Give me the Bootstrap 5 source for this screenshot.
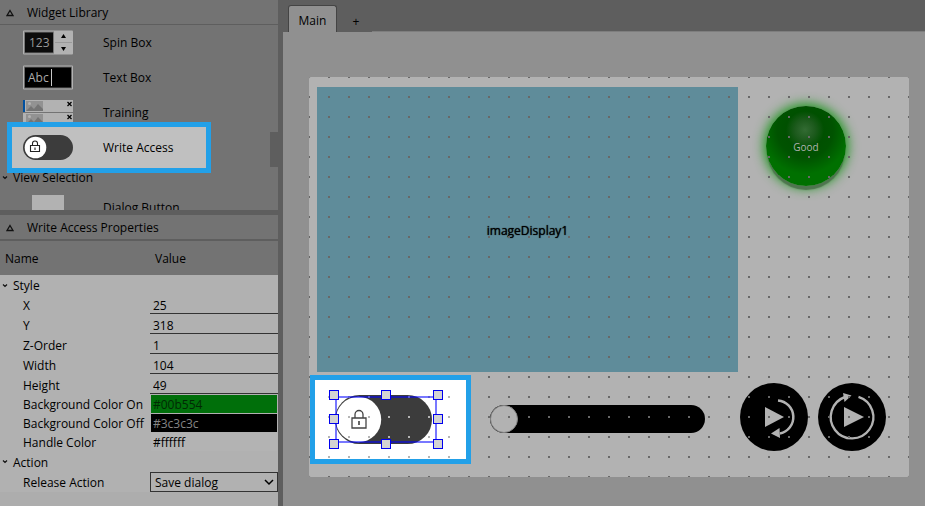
<!DOCTYPE html>
<html lang="en">
<head>
<meta charset="utf-8">
<meta name="viewport" content="width=device-width, initial-scale=1">
<title>View Designer</title>
<link href="https://cdn.jsdelivr.net/npm/bootstrap@5.3.0/dist/css/bootstrap.min.css" rel="stylesheet">
<style>
body{font-family:"Open Sans","Noto Sans",sans-serif;font-size:12px;line-height:18px;color:#000;background:#5e5e5e}
button{color:inherit;font:inherit}
.side{width:278px}
.pane-title{height:24px;background:#737373;font-size:12px;line-height:18px;padding:2px 0 0 6px;gap:13px}
.pane-title svg{width:8px;height:8px}
.lib-list{height:185px;background:#737373;margin-top:1px;overflow:hidden}
.lib-row{height:35px;width:100%;padding-left:23px}
.lib-row .thumb{width:50px;height:25px;margin-right:30px}
.picked{z-index:1}
.picked::before{content:"";z-index:-1;position:absolute;left:7px;top:-8px;width:204px;height:51px;background:#c0c0c0;border:5px solid #22a0e8}
.scroll-thumb{right:0;top:107px;width:8px;height:35px;background:#5e5e5e}
.fold{gap:5px;padding-left:2px}
.fold svg{width:6px;height:6px}
.lib-fold{height:25px}
.props-pane{margin-top:5px}
.props{background:#adadad;margin-top:2px}
.prop-table{table-layout:fixed;line-height:18px;background:#b1b1b1}
.prop-table th{font-weight:400}
.prop-table thead th{height:34px;background:#737373;padding:2px 5px 0}
.prop-table .c-name{width:150px}
.prop-table tbody td,.prop-table tbody th{padding:0;height:20px}
.prop-table tbody th{padding-top:2px}
.prop-table tbody .ind{padding-left:23px}
.prop-table .sect th{height:19px}
.prop-table .sect.s2 th{height:20px}
.prop-table .fold,.prop-table label{line-height:17px}
.prop-table .hue td,.prop-table .hue th{height:19px}
.prop-table .last td,.prop-table .last th{height:21px}
.prop-table label{white-space:nowrap;display:block}
.val{width:100%;height:20px;border:0;border-bottom:1px solid #333;background:transparent;padding:3px 3px 0;color:#000;line-height:16px;outline:0}
.hue .val{height:18px;margin:1px 3px 0 1px;padding:1px 2px 0;border:0;width:126px}
.hue .val.on{background:#006f0a;color:#002a04}
.hue .val.off{background:#000;color:#858585}
.hue .val.knob{background:#b3b3b3}
.pick-action{height:20px;border:1px solid #333;background:#b1b1b1;padding:1px 4px 0;color:#000;appearance:none;line-height:18px}
.pick-wrap svg{position:absolute;right:4px;top:6px;width:10px;height:8px;pointer-events:none}
.work{margin-left:5px;background:#5e5e5e;min-width:0}
.tabs{height:32px;padding-left:5px}
.tabs .tab-on{height:27px;width:49px;background:#909090;border:1px solid #444;border-bottom:0;border-radius:3px 3px 0 0}
.tabs .tab-on,.tabs .tab-add{padding:3px 0 0}
.tabs .tab-add{width:35px;height:24px;padding-left:3px}
.tabs .rule{height:1px;background:#7e7e7e}
.stage{background:#909090;padding:45px 16px 29px 26px}
.board{background:#b2b2b2;min-height:400px;border-radius:2px;overflow:hidden}
.board::after,.focus-area::before{content:"";position:absolute;inset:0;pointer-events:none;z-index:2;background:url("data:image/svg+xml,%3Csvg xmlns='http://www.w3.org/2000/svg' width='20' height='20'%3E%3Crect width='2' height='2' fill='%23686868'/%3E%3C/svg%3E") -1px -1px}
.focus-area::before{background:url("data:image/svg+xml,%3Csvg xmlns='http://www.w3.org/2000/svg' width='20' height='20'%3E%3Crect width='2' height='2' fill='%23b4b4b4'/%3E%3C/svg%3E") 13px 16px}
.node{position:absolute}
.image-display{left:8px;top:10px;width:421px;height:285px;background:#5f8c9a;font-size:12px;padding-top:3px;text-shadow:0 0 1px #000}
.lamp{left:457px;top:29px;width:80px;height:80px;color:#b2b2b2;font-size:10px;padding-top:2px;background:radial-gradient(circle at 39px 24px,#336b33 0,#1d5a1d 10px,#005000 19px,#005300 28px,#007000 44px);box-shadow:0 5px 1px -1px #4f754f,0 0 12px 2px #159415}
.focus-area{left:1px;top:298px;width:161px;height:89px;border:5px solid #22a0e8;background:#fff;z-index:3}
.switch{left:20px;top:15px;width:97px;height:49px}
.frame{left:20px;top:16px;width:102px;height:47px;border:2px solid rgba(0,0,255,.53);z-index:3}
.grip{position:absolute;width:10px;height:10px;background:#d3d3d3;border:1px solid #00e}
.g-l{left:-8px}.g-c{left:44px}.g-r{left:96px}
.g-t{top:-8px}.g-m{top:16px}.g-b{top:41px}
.slide{left:181px;top:328px;width:215px;height:28px;border-radius:14px;background:#000;appearance:none;margin:0}
.slide::-webkit-slider-thumb{appearance:none;width:28px;height:28px;border-radius:50%;background:#b2b2b2;border:1px solid #858585}
.slide::-moz-range-thumb{width:26px;height:26px;border-radius:50%;background:#b2b2b2;border:1px solid #858585}
.round{top:306px;width:68px;height:68px}
.run-once{left:431px}
.run-loop{left:509px}
</style>
<script src="https://cdn.jsdelivr.net/npm/bootstrap@5.3.0/dist/js/bootstrap.bundle.min.js"></script>
</head>
<body class="d-flex min-vh-100">
<svg class="d-none" aria-hidden="true">
  <symbol id="tri" viewBox="0 0 8 8"><path d="M4 1.500 7 6.500H1z" fill="none" stroke="#111" stroke-width="1.300"/></symbol>
  <symbol id="chev" viewBox="0 0 6 6"><path d="M1 1.500 3 3.500 5 1.500" fill="none" stroke="#111" stroke-width="1.200"/></symbol>
  <symbol id="pic" viewBox="0 0 50 12"><path d="M0 0h50v12H0z" fill="#b2b2b2"/><path d="M3 1h17v10H3z" fill="#929292"/><circle cx="6.500" cy="3.500" r="1.500" fill="#b2b2b2"/><path d="M3 11 8 6l3 3 4-5 5 5v2z" fill="#747474"/><path d="m44.500 2 4 4m0-4-4 4" stroke="#000" stroke-width="1.300"/></symbol>
</svg>

<aside class="side d-flex flex-column flex-shrink-0">
  <section>
    <h2 class="pane-title d-flex align-items-center m-0"><svg><use href="#tri"/></svg>Widget Library</h2>
    <div class="lib-list position-relative">
      <button class="lib-row d-flex align-items-center border-0 bg-transparent py-0 pe-0 text-start">
        <svg class="thumb" viewBox="0 0 50 25"><rect width="50" height="24" y=".5" rx="1" fill="#b2b2b2"/><rect x="1.500" y="2" width="29" height="21" fill="#0c0c0c" stroke="#777"/><text x="6" y="17" font-size="12" fill="#9a9a9a">123</text><path d="M32 12.500h17" stroke="#999"/><path d="m40.500 4 2.500 4h-5zM40.500 21l2.500-4h-5z"/></svg>Spin Box</button>
      <button class="lib-row d-flex align-items-center border-0 bg-transparent py-0 pe-0 text-start">
        <svg class="thumb" viewBox="0 0 50 25"><rect width="50" height="24" y=".5" rx="1" fill="#b2b2b2"/><rect x="1.500" y="2" width="47" height="21" fill="#000" stroke="#666"/><text x="5" y="17" font-size="12" fill="#aaa">Abc</text><path d="M28.500 4v17" stroke="#c8c8c8"/></svg>Text Box</button>
      <button class="lib-row d-flex align-items-center border-0 bg-transparent py-0 pe-0 text-start">
        <svg class="thumb" viewBox="0 0 50 25"><use href="#pic" width="50" height="12"/><use href="#pic" y="13" width="50" height="12"/><path d="M0 0h2v12H0z" fill="#0050a0"/></svg>Training</button>
      <button class="lib-row picked position-relative d-flex align-items-center border-0 bg-transparent py-0 pe-0 text-start">
        <svg class="thumb" viewBox="0 0 50 25"><rect width="50" height="25" rx="12.500" fill="#3c3c3c"/><circle cx="12.500" cy="12.500" r="10.800" fill="#fff"/><path d="M7.500 10.500h9v6h-9zM9.500 10V8.500a2.500 2.500 0 0 1 5 0V10M12 12.500v2.500" fill="none" stroke="#222" stroke-width="1.100"/></svg>Write Access</button>
      <div class="fold lib-fold d-flex align-items-center"><svg><use href="#chev"/></svg>View Selection</div>
      <button class="lib-row d-flex align-items-center border-0 bg-transparent py-0 pe-0 text-start">
        <svg class="thumb" viewBox="0 0 50 25"><rect x="9" y="-1" width="32" height="30" rx="1" fill="#b2b2b2"/></svg>Dialog Button</button>
      <div class="scroll-thumb position-absolute"></div>
    </div>
  </section>

  <section class="props-pane d-flex flex-column flex-grow-1">
    <h2 class="pane-title d-flex align-items-center m-0"><svg><use href="#tri"/></svg>Write Access Properties</h2>
    <div class="props flex-grow-1">
      <table class="prop-table w-100">
        <thead><tr><th class="c-name" scope="col">Name</th><th scope="col">Value</th></tr></thead>
        <tbody>
          <tr class="sect"><th colspan="2"><div class="fold d-flex align-items-center"><svg><use href="#chev"/></svg>Style</div></th></tr>
          <tr><th class="ind"><label for="px">X</label></th><td><input class="val d-block" id="px" value="25"></td></tr>
          <tr><th class="ind"><label for="py">Y</label></th><td><input class="val d-block" id="py" value="318"></td></tr>
          <tr><th class="ind"><label for="pz">Z-Order</label></th><td><input class="val d-block" id="pz" value="1"></td></tr>
          <tr><th class="ind"><label for="pw">Width</label></th><td><input class="val d-block" id="pw" value="104"></td></tr>
          <tr><th class="ind"><label for="ph">Height</label></th><td><input class="val d-block" id="ph" value="49"></td></tr>
          <tr class="hue"><th class="ind"><label for="con">Background Color On</label></th><td><input class="val on d-block" id="con" value="#00b554"></td></tr>
          <tr class="hue"><th class="ind"><label for="coff">Background Color Off</label></th><td><input class="val off d-block" id="coff" value="#3c3c3c"></td></tr>
          <tr class="hue"><th class="ind"><label for="chd">Handle Color</label></th><td><input class="val knob d-block" id="chd" value="#ffffff"></td></tr>
          <tr class="sect s2"><th colspan="2"><div class="fold d-flex align-items-center"><svg><use href="#chev"/></svg>Action</div></th></tr>
          <tr class="last"><th class="ind"><label for="act">Release Action</label></th><td><div class="pick-wrap position-relative"><select class="pick-action w-100 d-block rounded-0" id="act"><option>Save dialog</option></select><svg viewBox="0 0 10 8"><path d="m1 2 4 4 4-4" fill="none" stroke="#000" stroke-width="1.500"/></svg></div></td></tr>
        </tbody>
      </table>
    </div>
  </section>
</aside>

<main class="work d-flex flex-column flex-grow-1">
  <div class="tabs d-flex align-items-end" role="tablist">
    <button class="tab-on" role="tab" aria-selected="true">Main</button>
    <button class="tab-add border-0 bg-transparent" aria-label="Add view">+</button>
    <div class="rule flex-grow-1"></div>
  </div>
  <div class="stage d-flex flex-grow-1">
    <div class="board position-relative flex-grow-1">
      <div class="node image-display d-flex align-items-center justify-content-center">imageDisplay1</div>
      <div class="node lamp rounded-circle d-flex align-items-center justify-content-center">Good</div>
      <div class="node focus-area">
        <svg class="node switch" viewBox="0 0 97 49" role="img" aria-label="Write access switch"><rect width="97" height="49" rx="24.500" fill="#3c3c3c"/><circle cx="23.500" cy="24.500" r="22.700" fill="#fff"/><path d="M17 23h14v10H17zM20 23v-3.500a4 4 0 0 1 8 0V23" fill="none" stroke="#444" stroke-width="1.300"/><path d="M24 26v4" stroke="#333" stroke-width="1.500"/></svg>
        <div class="node frame">
          <i class="grip g-l g-t"></i><i class="grip g-c g-t"></i><i class="grip g-r g-t"></i>
          <i class="grip g-l g-m"></i><i class="grip g-r g-m"></i>
          <i class="grip g-l g-b"></i><i class="grip g-c g-b"></i><i class="grip g-r g-b"></i>
        </div>
      </div>
      <input class="node slide" type="range" min="0" max="100" value="0" aria-label="Slider">
      <button class="node round run-once rounded-circle border-0 p-0 bg-black" aria-label="Run once"><svg class="d-block" viewBox="0 0 68 68"><path d="M25 24v20l19-10z" fill="#b2b2b2"/><path d="M38 17.500a16.700 16.700 0 0 1 2 33" fill="none" stroke="#b2b2b2" stroke-width="2.500"/><path d="m31 50.500 8.500-5.500.5 10z" fill="#b2b2b2"/></svg></button>
      <button class="node round run-loop rounded-circle border-0 p-0 bg-black" aria-label="Run continuously"><svg class="d-block" viewBox="0 0 68 68"><path d="M26 24v20l20-10z" fill="#b2b2b2"/><path d="M40.500 13.800a21.300 21.300 0 1 1-13.500.2" fill="none" stroke="#b2b2b2" stroke-width="2.400"/><path d="m25 10 8.500 2.500L26.500 19z" fill="#b2b2b2"/></svg></button>
    </div>
  </div>
</main>
</body>
</html>
